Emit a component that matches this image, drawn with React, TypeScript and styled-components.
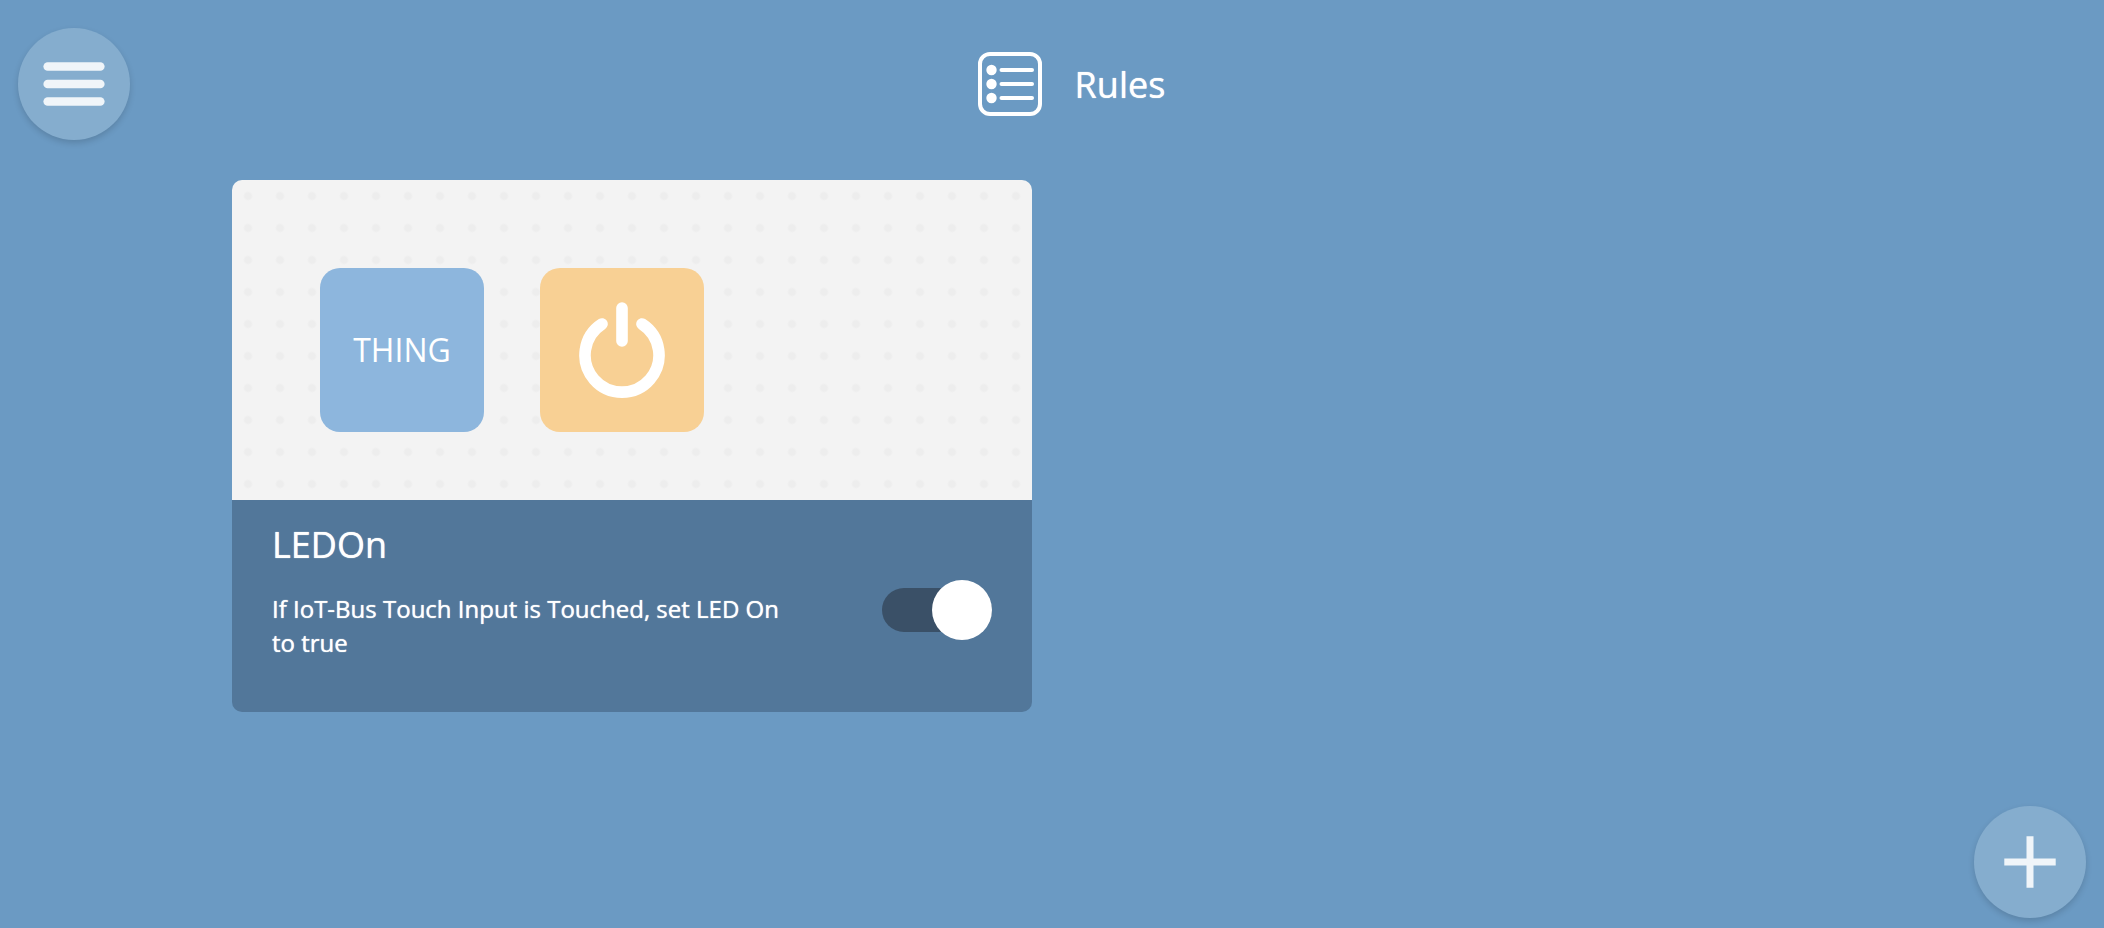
import React, { useState } from 'react';
import styled, { createGlobalStyle, css } from 'styled-components';

const GlobalStyle = createGlobalStyle`
  *, *::before, *::after { box-sizing: border-box; }
  body {
    margin: 0;
    background: #6b9ac3;
    color: #ffffff;
    font-family: "Open Sans", "Noto Sans", sans-serif;
  }
`;

/* Thickens the regular face without changing its widths. */
const heavyText = css`
  font-weight: 400;
  text-shadow: 0 0 1px currentColor;
`;

const Page = styled.div`
  min-height: 100vh;
`;

const RoundButton = styled.button<{ $corner: 'top' | 'bottom' }>`
  position: fixed;
  ${({ $corner }) => ($corner === 'top' ? 'top: 28px; left: 18px;' : 'bottom: 10px; right: 18px;')}
  width: 112px;
  height: 112px;
  padding: 0;
  border: 0;
  border-radius: 50%;
  display: grid;
  place-items: center;
  background: #85adce;
  color: #f0f5f9;
  box-shadow: 0 3px 6px rgba(0, 0, 0, 0.15);
  cursor: pointer;
`;

const Header = styled.header`
  display: flex;
  align-items: center;
  justify-content: center;
  gap: 33px;
  padding: 52px 0 64px 39px;
`;

const PageTitle = styled.h1`
  margin: 0;
  padding-top: 2px;
  font-size: 36px;
  line-height: 48px;
  ${heavyText}
`;

const RuleList = styled.main`
  display: grid;
  grid-template-columns: repeat(2, minmax(0, 1fr));
  gap: 40px;
  max-width: 1640px;
  margin: 0 auto;

  @media (max-width: 1400px) {
    grid-template-columns: minmax(0, 1fr);
    max-width: 800px;
  }
`;

const RuleCard = styled.article`
  border-radius: 10px;
  overflow: hidden;
`;

const Preview = styled.div`
  display: flex;
  gap: 56px;
  padding: 88px;
  height: 320px;
  background: radial-gradient(circle at 16px 16px, #ededed 3px, #f3f3f3 5px) 0 0 / 32px 32px;
`;

const Tile = styled.div<{ $color: string }>`
  width: 164px;
  height: 164px;
  border-radius: 20px;
  display: grid;
  place-items: center;
  background: ${({ $color }) => $color};
  font-size: 32px;
  line-height: 44px;
`;

const Details = styled.div`
  display: flex;
  align-items: flex-start;
  justify-content: space-between;
  gap: 88px;
  padding: 21px 40px 52px;
  background: #52779a;
`;

const RuleName = styled.h2`
  margin: 0 0 23px;
  font-size: 36px;
  line-height: 48px;
  ${heavyText}
`;

const RuleText = styled.p`
  margin: 0;
  font-size: 24px;
  line-height: 34px;
  ${heavyText}
`;

const Toggle = styled.input`
  appearance: none;
  flex: none;
  display: grid;
  align-items: center;
  width: 110px;
  height: 60px;
  margin: 59px 0 0;
  cursor: pointer;

  &::before,
  &::after {
    content: "";
    grid-area: 1 / 1;
  }
  &::before {
    height: 44px;
    border-radius: 22px;
    background: #3a5067;
  }
  &::after {
    width: 60px;
    height: 60px;
    border-radius: 50%;
    background: #ffffff;
    justify-self: start;
  }
  &:checked::after {
    justify-self: end;
  }
`;

const MenuIcon = () => (
  <svg width="62" height="46" viewBox="0 0 62 46" fill="currentColor" aria-hidden="true">
    <rect x="0.4" y="1.2" width="61.2" height="8.6" rx="4.3" />
    <rect x="0.4" y="18.7" width="61.2" height="8.6" rx="4.3" />
    <rect x="0.4" y="36.2" width="61.2" height="8.6" rx="4.3" />
  </svg>
);

const PlusIcon = () => (
  <svg width="52" height="52" viewBox="0 0 52 52" fill="currentColor" aria-hidden="true">
    <path d="M22.5 .3h7v22.2h22.2v7H29.5v22.2h-7V29.5H.3v-7h22.2z" />
  </svg>
);

const RulesIcon = () => (
  <svg width="64" height="64" viewBox="0 0 64 64" fill="none" stroke="currentColor" strokeWidth="4" strokeLinecap="round" aria-hidden="true">
    <rect x="2" y="2" width="60" height="60" rx="10" />
    {[18, 32, 46].map((y) => (
      <g key={y}>
        <circle cx="13.5" cy={y} r="5.2" fill="currentColor" stroke="none" />
        <path d={`M23.5 ${y}H54`} />
      </g>
    ))}
  </svg>
);

const PowerIcon = () => (
  <svg width="88" height="98" viewBox="0 0 88 98" fill="none" stroke="currentColor" strokeWidth="11.6" strokeLinecap="round" aria-hidden="true">
    <path d="M44 7.1V40" />
    <path d="M24 23A37 37 0 1 0 64 23" />
  </svg>
);

export default function App() {
  const [enabled, setEnabled] = useState(true);

  return (
    <Page>
      <GlobalStyle />
      <RoundButton $corner="top" aria-label="Menu">
        <MenuIcon />
      </RoundButton>
      <Header>
        <RulesIcon />
        <PageTitle>Rules</PageTitle>
      </Header>
      <RuleList>
        <RuleCard>
          <Preview>
            <Tile $color="#8db6dd">THING</Tile>
            <Tile $color="#f8d094">
              <PowerIcon />
            </Tile>
          </Preview>
          <Details>
            <div>
              <RuleName id="rule-name">LEDOn</RuleName>
              <RuleText>If IoT-Bus Touch Input is Touched, set LED On to true</RuleText>
            </div>
            <Toggle
              type="checkbox"
              role="switch"
              aria-labelledby="rule-name"
              checked={enabled}
              onChange={(event) => setEnabled(event.target.checked)}
            />
          </Details>
        </RuleCard>
      </RuleList>
      <RoundButton $corner="bottom" aria-label="Add rule">
        <PlusIcon />
      </RoundButton>
    </Page>
  );
}
